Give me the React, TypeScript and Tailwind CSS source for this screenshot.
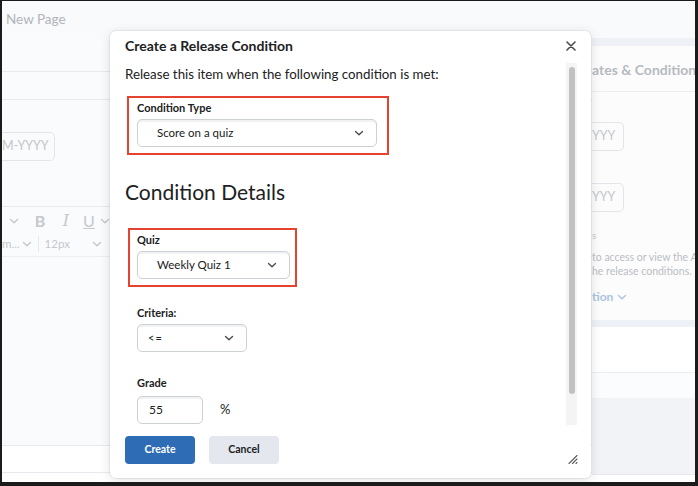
import React from "react";

function Chevron({ className = "" }: { className?: string }) {
  return (
    <svg width="10" height="10" viewBox="0 0 10 10" fill="none" className={className}>
      <path d="M1.5 3.5 L5 6.8 L8.5 3.5" stroke="currentColor" strokeWidth="1.4" strokeLinecap="round" strokeLinejoin="round" />
    </svg>
  );
}

function Select({ text, w, pl, small }: { text: string; w: string; pl: string; small?: boolean }) {
  return (
    <div
      className={`${w} ${pl} h-[28px] rounded-[5px] border border-[#cdd1d6] bg-white shadow-[inset_0_2px_0_0_rgba(181,189,194,0.2)] flex items-center justify-between pr-[12px] text-[#202122]`}
    >
      <span className={small ? "text-[11px] tracking-[1px]" : "text-[11.5px]"}>{text}</span>
      <Chevron className="text-[#494c4e]" />
    </div>
  );
}

function Label({ children }: { children: React.ReactNode }) {
  return <div className="text-[11px] leading-[16px] font-bold text-[#202122]">{children}</div>;
}

export default function App() {
  return (
    <div className="relative w-[698px] h-[486px] overflow-hidden border-l-2 border-t border-r-[3px] border-b-4 border-[#1b1b1b] bg-[#f9fafb] [font-family:Lato,'Noto_Sans',sans-serif]">
      {/* Background page */}
      <div className="flex flex-col h-full">
        <div className="h-[37px] pt-[8px] pl-[4px] text-[13.5px] leading-[20px] text-[#b0b4b9]">New Page</div>
        <div className="flex flex-1">
          {/* left column */}
          <div className="w-[590px] flex flex-col bg-[#fafbfc]">
            <div className="h-[34px] border-b border-[#e8eaed]" />
            <div className="h-[28px] border-b border-[#e8eaed]" />
            <div className="mt-[32px] w-[53px] h-[29px] rounded-r-[5px] border border-l-0 border-[#e3e5e8] flex items-center text-[12.5px] text-[#c3c7cb]">
              M-YYYY
            </div>
            <div className="h-[46px] border-b border-[#e8eaed]" />
            <div className="h-[24px] mt-[2px] flex items-center text-[#c4c8cc]">
              <span className="w-[24px] flex justify-center"><Chevron /></span>
              <span className="w-[28px] flex justify-center text-[16px] font-bold">B</span>
              <span className="w-[24px] flex justify-center text-[16px] italic [font-family:'DejaVu_Serif',serif]">I</span>
              <span className="w-[22px] flex justify-center text-[16px] underline">U</span>
              <span className="w-[10px] flex justify-center"><Chevron /></span>
            </div>
            <div className="h-[22px] flex items-center text-[11.5px] text-[#c4c8cc]">
              <span>m...</span>
              <span className="ml-[2px]"><Chevron /></span>
              <span className="ml-[6px] w-px h-[16px] bg-[#e8eaed]" />
              <span className="ml-[6px]">12px</span>
              <span className="ml-[22px]"><Chevron /></span>
              <span className="ml-[9px] w-px h-[16px] bg-[#e8eaed]" />
              <span className="ml-[6px] w-[3px] h-[6px] bg-[#d4d7da]" />
            </div>
            <div className="h-[2px] border-b border-[#eceef0]" />
            <div className="h-[189px] border-b border-[#e8eaed]" />
            <div className="h-[27px] border-b border-[#e8eaed] bg-white" />
            <div className="flex-1 bg-white" />
          </div>
          {/* right column */}
          <div className="flex-1 flex flex-col overflow-hidden">
            <div className="h-[8px] bg-[#eef1f5]" />
            <div className="h-[274px] bg-[#fcfcfd] flex flex-col">
              <div className="h-[46px] border-b border-[#eceef0] pt-[14px] whitespace-nowrap text-[14px] leading-[20px] font-bold text-[#b6babf]">
                ates &amp; Condition
              </div>
              <div className="mt-[30px] w-[32px] h-[29px] rounded-r-[5px] border border-l-0 border-[#e3e5e8] flex items-center text-[12.5px] text-[#c3c7cb]">
                YYY
              </div>
              <div className="mt-[32px] w-[32px] h-[29px] rounded-r-[5px] border border-l-0 border-[#e3e5e8] flex items-center text-[12.5px] text-[#c3c7cb]">
                YYY
              </div>
              <div className="mt-[17px] text-[10px] leading-[12px] text-[#c3c7cb]">s</div>
              <div className="mt-[9px] whitespace-nowrap text-[10.5px] leading-[14px] text-[#babec3]">
                to access or view the Ac
                <br />
                he release conditions.
              </div>
              <div className="mt-[10px] flex items-center gap-[4px] text-[12px] font-bold text-[#abc2e0]">
                tion
                <Chevron />
              </div>
            </div>
            <div className="h-[7px] bg-[#eef1f5]" />
            <div className="h-[46px] bg-white border-b border-[#eceef0]" />
            <div className="h-[25px] bg-[#fbfcfd]" />
            <div className="h-[77px] bg-[#f1f3f7] border-b border-[#e6e8eb]" />
            <div className="flex-1 bg-white" />
          </div>
        </div>
      </div>

      {/* Modal */}
      <div className="absolute left-[108px] top-[30px] w-[481px] h-[447px] bg-white rounded-[6px] shadow-[0_0_0_1px_rgba(0,0,0,0.05),0_2px_12px_rgba(0,0,0,0.12)] flex flex-col">
        <div className="h-[25px] pt-[5px] pl-[15px] pr-[15px] flex items-start justify-between">
          <h1 className="text-[14px] leading-[20px] font-bold text-[#202122]">Create a Release Condition</h1>
          <svg width="10" height="10" viewBox="0 0 10 10" className="mt-[5px]">
            <path d="M1 1 L9 9 M9 1 L1 9" stroke="#494c4e" strokeWidth="1.6" strokeLinecap="round" />
          </svg>
        </div>
        <div className="mt-[7px] h-[362px] flex">
          <div className="flex-1 overflow-hidden pl-[15px] flex flex-col items-start">
            <p className="mt-[1px] text-[13.3px] leading-[20px] text-[#202122]">
              Release this item when the following condition is met:
            </p>
            <div className="mt-[12px] ml-[2px] w-[262px] border-2 border-[#e5432f] pl-[8px] pt-[2px] pb-[6px]">
              <Label>Condition Type</Label>
              <div className="mt-[3px]">
                <Select text="Score on a quiz" w="w-[240px]" pl="pl-[19px]" />
              </div>
            </div>
            <h2 className="mt-[25px] text-[21px] leading-[24px] text-[#202122]">Condition Details</h2>
            <div className="mt-[24px] ml-[3px] w-[169px] border-2 border-[#e5432f] pl-[7px] pt-[2px] pb-[6px]">
              <Label>Quiz</Label>
              <div className="mt-[3px]">
                <Select text="Weekly Quiz 1" w="w-[153px]" pl="pl-[19px]" />
              </div>
            </div>
            <div className="mt-[18px] ml-[12px]">
              <Label>Criteria:</Label>
            </div>
            <div className="mt-[3px] ml-[12px]">
              <Select text="<=" w="w-[110px]" pl="pl-[10px]" small />
            </div>
            <div className="mt-[23px] ml-[12px]">
              <Label>Grade</Label>
            </div>
            <div className="mt-[5px] ml-[12px] flex items-center">
              <div className="w-[66px] h-[28px] rounded-[5px] border border-[#cdd1d6] bg-white shadow-[inset_0_2px_0_0_rgba(181,189,194,0.2)] pl-[11px] flex items-center text-[12px] text-[#202122]">
                55
              </div>
              <span className="ml-[17px] text-[13px] text-[#202122]">%</span>
            </div>
          </div>
          <div className="w-[11px] mr-[14px] bg-[#f4f4f4] flex flex-col">
            <div className="mt-[4px] ml-[3px] w-[6px] h-[327px] rounded-full bg-[#c1c1c1]" />
          </div>
        </div>
        <div className="mt-[11px] pl-[15px] flex gap-[14px]">
          <button className="w-[70px] h-[28px] rounded-[4px] bg-[#2f6cb6] text-white text-[10.5px] font-bold">Create</button>
          <button className="w-[70px] h-[28px] rounded-[4px] bg-[#e4e8ee] text-[#202122] text-[10.5px] font-bold">Cancel</button>
        </div>
        <svg width="10" height="10" viewBox="0 0 10 10" className="absolute right-[13px] bottom-[14px]">
          <path d="M1 9.5 L9 1.5 M4.5 9.5 L9 5 M8 9.5 L9 8.5" stroke="#5a5d60" strokeWidth="1.1" strokeLinecap="round" />
        </svg>
      </div>
    </div>
  );
}
